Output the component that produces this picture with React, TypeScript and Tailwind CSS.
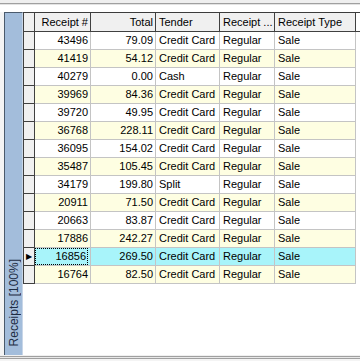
import React from 'react';

const rows: [string, string, string][] = [
  ['43496', '79.09', 'Credit Card'],
  ['41419', '54.12', 'Credit Card'],
  ['40279', '0.00', 'Cash'],
  ['39969', '84.36', 'Credit Card'],
  ['39720', '49.95', 'Credit Card'],
  ['36768', '228.11', 'Credit Card'],
  ['36095', '154.02', 'Credit Card'],
  ['35487', '105.45', 'Credit Card'],
  ['34179', '199.80', 'Split'],
  ['20911', '71.50', 'Credit Card'],
  ['20663', '83.87', 'Credit Card'],
  ['17886', '242.27', 'Credit Card'],
  ['16856', '269.50', 'Credit Card'],
  ['16764', '82.50', 'Credit Card'],
];

const SELECTED = 12;

export default function App() {
  return (
    <div
      className="w-[360px] h-[361px] bg-white overflow-hidden flex flex-col text-[11px] text-black"
      style={{ fontFamily: '"Liberation Sans", Arial, sans-serif' }}
    >
      {/* top frame */}
      <div className="h-[3px] bg-[#efefef]" />
      <div className="h-px bg-[#a0a0a0]" />
      <div className="h-px bg-[#e3e3e3]" />
      <div className="h-[7px] bg-white" />

      <div className="flex flex-1 min-h-0">
        <div className="w-[4px] bg-[#f4f4f4]" />
        {/* side tab */}
        <div className="w-[19px] bg-[#a3bddb] border-t border-l border-[#4a5a6c] border-r border-r-[#c8d6e8] flex items-end justify-center pb-[9px]">
          <span className="[writing-mode:vertical-rl] rotate-180 text-[12px] text-[#1e2d44] whitespace-nowrap leading-none">
            Receipts [100%]
          </span>
        </div>

        {/* grid */}
        <div className="flex-1 flex flex-col border-t border-[#3c3c3c] bg-white">
          {/* header */}
          <div className="flex h-[19px] border-b border-[#404040]">
            <div className="w-[12px] bg-[#f0f0f0] border-r border-[#404040] border-l border-l-[#404040]" />
            <div className="w-[56px] bg-[#f0f0f0] border-r border-[#404040] text-right pr-[2px] leading-[18px]">Receipt #</div>
            <div className="w-[65px] bg-[#f0f0f0] border-r border-[#404040] text-right pr-[2px] leading-[18px]">Total</div>
            <div className="w-[64px] bg-[#f0f0f0] border-r border-[#404040] pl-[3px] leading-[18px]">Tender</div>
            <div className="w-[55px] bg-[#f0f0f0] border-r border-[#404040] pl-[3px] leading-[18px] whitespace-nowrap overflow-hidden">Receipt ...</div>
            <div className="w-[81px] bg-[#f0f0f0] border-r border-[#404040] pl-[3px] leading-[18px]">Receipt Type</div>
          </div>

          {rows.map(([num, total, tender], i) => {
            const sel = i === SELECTED;
            const bg = sel ? 'bg-[#a8f4fa]' : i % 2 === 1 ? 'bg-[#fefee2]' : 'bg-white';
            return (
              <div key={num} className="flex h-[18px]">
                <div className="w-[12px] bg-[#f0f0f0] border-r border-b border-[#404040] border-l border-l-[#404040] flex items-center justify-center">
                  {sel && <span className="text-[8px] leading-none">&#9654;</span>}
                </div>
                <div className={`w-[56px] ${bg} border-r border-b border-[#c4c4c4] text-right pr-[2px] leading-[17px]`}>
                  <span className={sel ? 'block h-full border border-dotted border-black pr-px leading-[15px]' : ''}>{num}</span>
                </div>
                <div className={`w-[65px] ${bg} border-r border-b border-[#c4c4c4] text-right pr-[2px] leading-[17px]`}>{total}</div>
                <div className={`w-[64px] ${bg} border-r border-b border-[#c4c4c4] pl-[3px] leading-[17px] whitespace-nowrap`}>{tender}</div>
                <div className={`w-[55px] ${bg} border-r border-b border-[#c4c4c4] pl-[3px] leading-[17px]`}>Regular</div>
                <div className={`w-[81px] ${bg} border-r border-b border-[#c4c4c4] pl-[3px] leading-[17px]`}>Sale</div>
              </div>
            );
          })}
        </div>
      </div>

      {/* bottom frame */}
      <div className="h-px bg-[#f0f0f0]" />
      <div className="h-px bg-[#a0a0a0]" />
      <div className="h-px bg-[#e8e8e8]" />
      <div className="h-px bg-[#a0a0a0]" />
      <div className="h-[2px] bg-[#f4f4f4]" />
    </div>
  );
}
